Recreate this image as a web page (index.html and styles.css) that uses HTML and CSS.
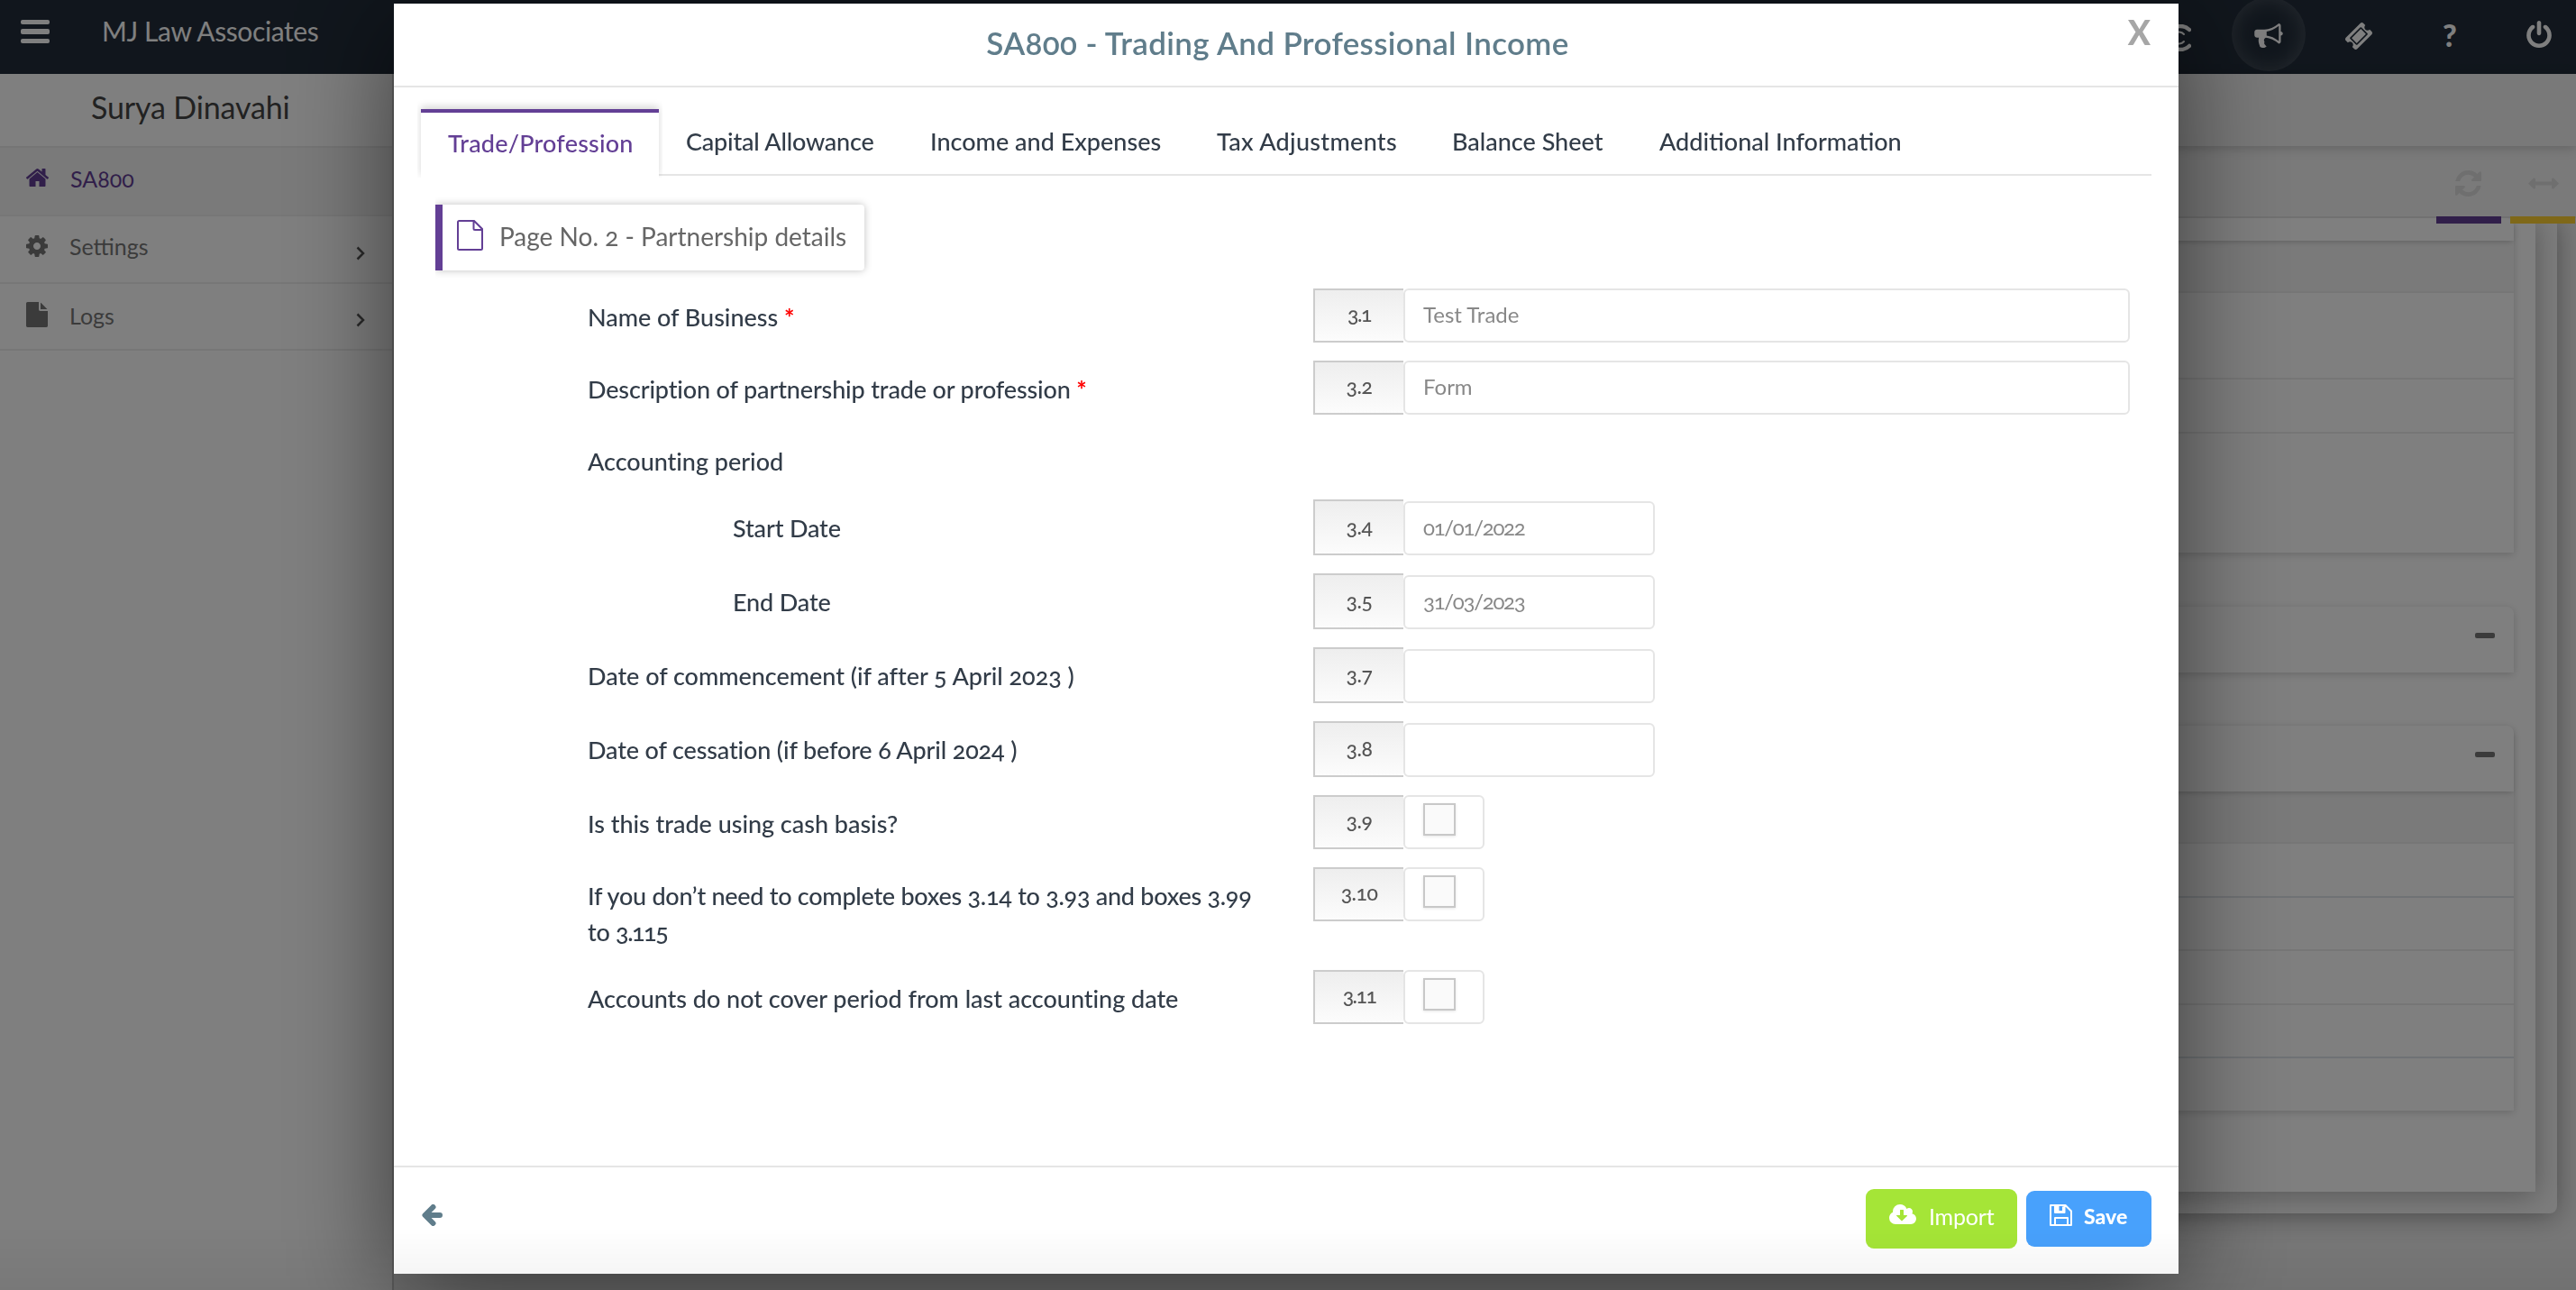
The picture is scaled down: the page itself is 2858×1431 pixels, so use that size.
FILE: index.html
```html
<!DOCTYPE html>
<html lang="en">
<head>
    <meta charset="UTF-8">
    <meta name="viewport" content="width=device-width, initial-scale=1.0">
    <title>SA800 - Trading And Professional Income</title>
    <link rel="stylesheet" href="styles.css">
</head>
<body>
    <header class="topbar">
        <div class="burger"><span></span><span></span><span></span></div>
        <div class="firm">MJ Law Associates</div>
        <nav class="top-icons">
            <svg class="i-sync" viewBox="0 0 30 30"><g fill="none" stroke="#fff" stroke-linecap="round"><path stroke-width="4.5" d="M28 6A14 13 0 1 0 28 24"/><path stroke-width="2" d="M22 11A7 6.500 0 1 0 22 19"/></g></svg>
            <div class="horn"><svg viewBox="0 128 1792 1536"><path d="M1664 640q53 0 90.500 37.500t37.500 90.500-37.500 90.500-90.500 37.500v384q0 52-38 90t-90 38q-417-347-812-380-58 19-91 66t-31 100.500 40 92.500q-20 33-23 65.500t6 58 33.500 55 48 50 61.500 50.500q-29 58-111.500 83t-168.500 11.500-132-55.500q-7-23-29.500-87.500t-32-94.500-23-89-15-101 3.500-98.500 22-110.500h-122q-66 0-113-47t-47-113v-192q0-66 47-113t113-47h480q435 0 896-384 52 0 90 38t38 90v384zm-128 604v-954q-394 302-768 343v270q377 42 768 341z"/></svg></div>
            <svg class="i-ticket" viewBox="53 53 1686 1686"><path d="M1024 452l316 316-572 572-316-316zm-211 979l618-618q19-19 19-45t-19-45l-362-362q-18-18-45-18t-45 18l-618 618q-19 19-19 45t19 45l362 362q18 18 45 18t45-18zm889-637l-907 908q-37 37-90.500 37t-90.500-37l-126-126q56-56 56-136t-56-136-136-56-136 56l-125-126q-37-37-37-90.500t37-90.500l907-906q37-37 90.500-37t90.500 37l125 125q-56 56-56 136t56 136 136 56 136-56l126 125q37 37 37 90.500t-37 90.500z"/></svg>
            <span class="help">?</span>
            <svg class="i-power" viewBox="128 0 1536 1664"><path d="M1664 896q0 156-61 298t-164 245-245 164-298 61-298-61-245-164-164-245-61-298q0-182 80.500-343t226.500-270q43-32 95.500-25t83.500 50q32 42 24.500 94.500t-49.500 84.500q-98 74-151.500 181t-53.500 228q0 104 40.500 198.500t109.500 163.500 163.500 109.500 198.500 40.500 198.500-40.500 163.500-109.500 109.500-163.500 40.500-198.500q0-121-53.500-228t-151.500-181q-42-32-49.500-84.500t24.500-94.500q31-43 84-50t95 25q146 109 226.500 270t80.500 343zm-640-768v640q0 52-38 90t-90 38-90-38-38-90v-640q0-52 38-90t90-38 90 38 38 90z"/></svg>
        </nav>
    </header>

    <div class="layout">
        <aside class="sidebar">
            <div class="user">Surya Dinavahi</div>
            <div class="side-item active">
                <svg class="i-home" viewBox="96 253 1600 1283"><path d="M1472 992v480q0 26-19 45t-45 19h-384v-384h-256v384h-384q-26 0-45-19t-19-45v-480q0-1 .5-3t.5-3l575-474 575 474q1 2 1 6zm223-69l-62 74q-8 9-21 11h-3q-13 0-21-7l-692-577-692 577q-12 8-24 7-13-2-21-11l-62-74q-8-10-7-23.500t11-21.500l719-599q32-26 76-26t76 26l244 204v-195q0-14 9-23t23-9h192q14 0 23 9t9 23v408l219 182q10 8 11 21.500t-7 23.500z"/></svg>
                <span class="side-name">SA800</span>
            </div>
            <div class="side-item">
                <svg class="i-cog" viewBox="128 128 1536 1536"><path d="M1152 896q0-106-75-181t-181-75-181 75-75 181 75 181 181 75 181-75 75-181zm512-109v222q0 12-8 23t-20 13l-185 28q-19 54-39 91 35 50 107 138 10 12 10 25t-9 23q-27 37-99 108t-94 71q-12 0-26-9l-138-108q-44 23-91 38-16 136-29 186-7 28-36 28h-222q-14 0-24.500-8.500t-11.500-21.500l-28-184q-49-16-90-37l-141 107q-10 9-25 9-14 0-25-11-126-114-165-168-7-10-7-23 0-12 8-23 15-21 51-66.500t54-70.500q-27-50-41-99l-183-27q-13-2-21-12.500t-8-23.500v-222q0-12 8-23t19-13l186-28q14-46 39-92-40-57-107-138-10-12-10-24 0-10 9-23 26-36 98.500-107.500t94.500-71.500q13 0 26 10l138 107q44-23 91-38 16-136 29-186 7-28 36-28h222q14 0 24.500 8.500t11.500 21.500l28 184q49 16 90 37l142-107q9-9 24-9 13 0 25 10 129 119 165 170 7 8 7 22 0 12-8 23-15 21-51 66.500t-54 70.500q26 50 41 98l183 28q13 2 21 12.500t8 23.500z"/></svg>
                <span class="side-name">Settings</span>
                <svg class="chev" viewBox="0 0 10 16"><path d="M1.500 1.500L8 8l-6.500 6.500"/></svg>
            </div>
            <div class="side-item last">
                <svg class="i-file" viewBox="128 0 1536 1792"><path d="M1152 512v-472q22 14 36 28l408 408q14 14 28 36h-472zm-128 32q0 40 28 68t68 28h544v1056q0 40-28 68t-68 28h-1344q-40 0-68-28t-28-68v-1600q0-40 28-68t68-28h800v544z"/></svg>
                <span class="side-name">Logs</span>
                <svg class="chev" viewBox="0 0 10 16"><path d="M1.500 1.500L8 8l-6.500 6.500"/></svg>
            </div>
        </aside>

        <main class="main">
            <div class="crumbs"></div>
            <div class="toolbar">
                <div class="tool purple"><svg viewBox="128 128 1536 1536"><path d="M1639 1056q0 5-1 7-64 268-268 434.500t-478 166.500q-146 0-282.500-55t-243.500-157l-129 129q-19 19-45 19t-45-19-19-45v-448q0-26 19-45t45-19h448q26 0 45 19t19 45-19 45l-137 137q71 66 161 102t187 36q134 0 250-65t186-179q11-17 53-117 8-23 30-23h192q13 0 22.500 9.500t9.500 22.500zm25-800v448q0 26-19 45t-45 19h-448q-26 0-45-19t-19-45 19-45l138-138q-148-137-349-137-134 0-250 65t-186 179q-11 17-53 117-8 23-30 23h-199q-13 0-22.500-9.500t-9.500-22.500v-7q65-268 270-434.500t480-166.500q146 0 284 55.500t245 156.500l130-129q19-19 45-19t45 19 19 45z"/></svg></div>
                <div class="tool yellow"><svg class="wide" viewBox="0 0 34 13"><path d="M0 6.500L6 .5Q8 0 8 2v2.500h18V2q0-2 2-1.500l6 6-6 6q-2 .5-2-1.500V8.500H8V11q0 2-2 1.500z"/></svg></div>
            </div>
            <div class="outer">
                <div class="inner">
                    <section class="card first">
                        <div class="card-head"></div>
                        <div class="line shade h58"></div>
                        <div class="line h96"></div>
                        <div class="line h59"></div>
                        <div class="line h133"></div>
                    </section>
                    <section class="card second">
                        <div class="card-head"><i class="minus"></i></div>
                    </section>
                    <section class="card third">
                        <div class="card-head"><i class="minus"></i></div>
                        <div class="line shade h58"></div>
                        <div class="line h59 blue"></div>
                        <div class="line h59"></div>
                        <div class="line h59"></div>
                        <div class="line h59 blue"></div>
                        <div class="line h58"></div>
                    </section>
                </div>
            </div>
        </main>
    </div>

    <div class="backdrop">
        <div class="modal">
            <div class="modal-header">
                <h1>SA800 - Trading And Professional Income</h1>
                <span class="close">X</span>
            </div>

            <div class="modal-body">
                <ul class="tabs">
                    <li class="tab-trade active">Trade/Profession</li>
                    <li class="tab-capital">Capital Allowance</li>
                    <li class="tab-income">Income and Expenses</li>
                    <li class="tab-tax">Tax Adjustments</li>
                    <li class="tab-balance">Balance Sheet</li>
                    <li class="tab-info">Additional Information</li>
                </ul>

                <div class="page-title">
                    <svg viewBox="0 0 29 34"><path d="M2.500 1h16.500L28 10v21.500q0 1.500-1.500 1.500h-24Q1 33 1 31.500v-29Q1 1 2.500 1zM18.500 1v8.500q0 1.500 1.500 1.500h8"/></svg>
                    <span>Page No. 2 - Partnership details</span>
                </div>

                <div class="row">
                    <label>Name of Business <b>*</b></label>
                    <span class="addon ones">3.1</span><div class="input full">Test Trade</div>
                </div>
                <div class="row">
                    <label class="snug">Description of partnership trade or profession <b>*</b></label>
                    <span class="addon">3.2</span><div class="input full">Form</div>
                </div>
                <div class="row heading">
                    <label>Accounting period</label>
                </div>
                <div class="row date">
                    <label class="indent snug">Start Date</label>
                    <span class="addon">3.4</span><div class="input">01/01/2022</div>
                </div>
                <div class="row date">
                    <label class="indent snug">End Date</label>
                    <span class="addon">3.5</span><div class="input">31/03/2023</div>
                </div>
                <div class="row date">
                    <label>Date of commencement (if after 5 April 2023 )</label>
                    <span class="addon">3.7</span><div class="input"></div>
                </div>
                <div class="row date">
                    <label class="snug">Date of cessation (if before 6 April 2024 )</label>
                    <span class="addon">3.8</span><div class="input"></div>
                </div>
                <div class="row">
                    <label>Is this trade using cash basis?</label>
                    <span class="addon">3.9</span><div class="input check"><i></i></div>
                </div>
                <div class="row tall">
                    <label class="snugger">If you don’t need to complete boxes 3.14 to 3.93 and boxes 3.99<br>to <span class="ones">3.115</span></label>
                    <span class="addon">3.10</span><div class="input check"><i></i></div>
                </div>
                <div class="row">
                    <label>Accounts do not cover period from last accounting date</label>
                    <span class="addon ones">3.11</span><div class="input check"><i></i></div>
                </div>
            </div>

            <div class="modal-footer">
                <svg class="back" viewBox="0 0 23 24"><path d="M12.500 3L3.500 12l9 9M4.500 12H20"/></svg>
                <button class="btn import">
                    <svg viewBox="-64 128 1920 1408"><path d="M1216 928q0-14-9-23t-23-9h-224v-352q0-13-9.500-22.500t-22.500-9.500h-192q-13 0-22.500 9.500t-9.500 22.500v352h-224q-13 0-22.500 9.500t-9.500 22.500q0 14 9 23l352 352q9 9 23 9t23-9l351-351q10-12 10-24zm640 224q0 159-112.500 271.500t-271.500 112.500h-1088q-185 0-316.500-131.500t-131.500-316.500q0-130 70-240t188-165q-2-30-2-43 0-212 150-362t362-150q156 0 285.500 87t188.500 231q71-62 166-62 106 0 181 75t75 181q0 76-41 138 130 31 213.500 135.500t83.500 238.500z"/></svg>
                    <span>Import</span>
                </button>
                <button class="btn save">
                    <svg viewBox="0 0 25 24"><path fill="none" stroke="#fff" stroke-width="2" stroke-linejoin="round" d="M1 1h16.500L24 7.500V23H1zM6 23v-8h14v8M6 1v8h10.500V1"/><path fill="#fff" d="M6 1h4.500v8H6zM14 2.500h2.500V9H10V7h4z"/></svg>
                    <span>Save</span>
                </button>
            </div>
        </div>
    </div>
    <div class="bottom-fade"></div>
</body>
</html>
```
FILE: styles.css
```css
:root {
    --purple: #633f95;
    --ink: #323c48;
    --line: #e5e5e5;
    --slate: #607d8b;
}

* {
    box-sizing: border-box;
}

body {
    margin: 0;
    height: 1431px;
    overflow: hidden;
    background: #f1f1f1;
    font-family: Lato, "Open Sans", sans-serif;
    font-variant-numeric: oldstyle-nums;
    color: var(--ink);
}

svg {
    display: block;
    flex: none;
}

/* top bar */
.topbar {
    height: 82px;
    background: #222d3a;
    display: flex;
    align-items: flex-start;
    padding-left: 23px;
}

.burger {
    width: 32px;
    padding-top: 22px;
    display: grid;
    gap: 5px;
}

.burger span {
    height: 5.400px;
    border-radius: 2px;
    background: #fff;
}

.firm {
    margin: 15px 0 0 58px;
    font-size: 30px;
    line-height: 38px;
    color: #fff;
    letter-spacing: -0.4px;
}

.top-icons {
    margin-left: auto;
    padding-right: 27px;
    display: flex;
    align-items: flex-start;
    fill: #fff;
}

.i-sync {
    width: 30px;
    height: 30px;
    margin: 27px 45px 0 0;
}

.horn {
    width: 82px;
    height: 82px;
    margin: -3px 44px 0 0;
    border-radius: 50%;
    box-shadow: inset 0 0 24px rgba(255, 255, 255, 0.2);
    display: grid;
    place-content: center;
}

.horn svg {
    width: 32px;
    height: 27px;
    margin-top: 2px;
}

.i-ticket {
    width: 30px;
    height: 30px;
    margin-top: 25px;
}

.help {
    width: 18px;
    margin: 19px 75px 0 78px;
    font: 900 34px/40px Lato, sans-serif;
    color: #fff;
}

.i-power {
    width: 28px;
    height: 30px;
    margin-top: 23px;
}

/* page behind the dialog */
.layout {
    display: flex;
    height: 1349px;
}

.sidebar {
    position: relative;
    z-index: 5;
    width: 437px;
    background: #fff;
    border-right: 2px solid #ccc;
}

.user {
    height: 80px;
    padding: 16px 0 0 101px;
    font-size: 34px;
    line-height: 42px;
    letter-spacing: -0.15px;
    color: #444;
    white-space: nowrap;
}

.side-item {
    height: 75px;
    padding: 0 30px 0 29px;
    border-bottom: 2px solid #eee;
    display: flex;
    align-items: center;
    fill: #777;
    color: #777;
    font-size: 25px;
}

.side-item.active {
    height: 78px;
    background: #f4f4f4;
    border-top: 2px solid #ebebeb;
    fill: var(--purple);
    color: var(--purple);
}

.side-item.last {
    height: 74px;
}

.side-name {
    margin-left: 24px;
    padding-bottom: 7px;
    width: 318px;
}

.last .side-name {
    padding-bottom: 3px;
}

.i-home {
    width: 25px;
    height: 20px;
    margin-top: -8px;
}

.i-cog {
    width: 24px;
    height: 24px;
    margin-top: -7px;
}

.i-file {
    width: 24px;
    height: 28px;
    margin-top: -5px;
}

.chev {
    width: 10px;
    height: 16px;
    margin-top: 8px;
    fill: none;
    stroke: #555;
    stroke-width: 2.500;
}

.main {
    flex: 1;
    display: flex;
    flex-direction: column;
    align-items: flex-start;
}

.crumbs {
    width: 100%;
    height: 80px;
    flex: none;
    background: #f2f2f2;
    box-shadow: 0 2px 12px rgba(0, 0, 0, 0.2);
    z-index: 3;
}

.toolbar {
    width: 100%;
    height: 80px;
    flex: none;
    background: #f4f4f4;
    border-bottom: 2px solid #e2e2e2;
    display: flex;
    justify-content: flex-end;
    gap: 10px;
    padding-right: 1px;
    z-index: 2;
}

.tool {
    width: 72px;
    height: 86px;
    padding-top: 27px;
    border-bottom: 8px solid var(--purple);
    display: flex;
    justify-content: center;
    fill: #dedede;
}

.tool svg {
    width: 29px;
    height: 29px;
    margin-left: -2px;
}

.tool .wide {
    width: 34px;
    height: 13px;
    margin: 8px 0 0 2px;
}

.tool.yellow {
    border-color: #ffd032;
}

.outer {
    width: 2400px;
    height: 1104px;
    padding-right: 24px;
    background: #f9f9f9;
    border-radius: 0 0 8px 8px;
    box-shadow: 0 4px 30px rgba(0, 0, 0, 0.35);
}

.inner {
    height: 1080px;
    padding-right: 24px;
    background: #fff;
    box-shadow: 0 4px 30px rgba(0, 0, 0, 0.3);
    display: flex;
    flex-direction: column;
    gap: 59.500px;
}

.card {
    box-shadow: 0 2px 10px rgba(0, 0, 0, 0.18);
    border-radius: 0 8px 0 0;
}

.card-head {
    height: 73px;
    padding: 29px 21px 0 0;
    display: flex;
    justify-content: flex-end;
    position: relative;
    box-shadow: 0 3px 6px -2px rgba(0, 0, 0, 0.22);
    border-radius: inherit;
}

.first .card-head {
    height: 25px;
    padding-top: 0;
}

.second .card-head {
    box-shadow: none;
}

.minus {
    width: 22px;
    height: 6px;
    border-radius: 2px;
    background: #777;
}

.line {
    border-bottom: 2px solid #ededed;
}

.line:last-child {
    border-bottom: 0;
}

.shade {
    background: #f5f5f5;
}

.line.blue {
    border-color: #dfe5ea;
}

.h58 { height: 58px; }
.h59 { height: 59.500px; }
.h96 { height: 96px; }
.h133 { height: 132.500px; }

/* dialog */
.backdrop {
    position: fixed;
    inset: 0;
    z-index: 10;
    background: rgba(0, 0, 0, 0.5);
    padding: 4px 0 0 437px;
}

.modal {
    width: 1980px;
    height: 1409px;
    background: #fff;
    box-shadow: 0 20px 110px rgba(0, 0, 0, 0.55);
    display: flex;
    flex-direction: column;
}

.modal-header {
    height: 93px;
    flex: none;
    border-bottom: 2px solid var(--line);
    position: relative;
}

.modal-header h1 {
    margin: 0;
    padding: 21px 19px 0 0;
    text-align: center;
    font-size: 35px;
    line-height: 44px;
    font-weight: 600;
    letter-spacing: 0.35px;
    color: var(--slate);
}

.close {
    position: absolute;
    right: 31px;
    top: 12px;
    font-size: 37px;
    line-height: 40px;
    font-weight: 900;
    color: #a6a6a6;
}

.modal-body {
    flex: 1;
    padding: 24px 30px 0;
}

.tabs {
    list-style: none;
    margin: 0;
    padding: 0;
    height: 74px;
    border-bottom: 2px solid var(--line);
    display: flex;
    font-size: 27px;
    font-weight: 500;
    line-height: 36px;
    white-space: nowrap;
}

.tabs li {
    padding: 18px 0 0 30px;
}

.tabs li.active {
    height: 76px;
    background: #fff;
    color: var(--purple);
    border-top: 4px solid var(--purple);
    padding-top: 16px;
    box-shadow: 0 -3px 8px rgba(0, 0, 0, 0.16);
    clip-path: inset(-12px -4px 0 -4px);
}

.tab-trade { width: 264px; letter-spacing: 0.2px; }
.tab-capital { width: 271px; letter-spacing: -0.2px; }
.tab-income { width: 318px; }
.tab-tax { width: 261px; letter-spacing: 0.3px; }
.tab-balance { width: 230px; }

.page-title {
    width: 476px;
    height: 73px;
    margin: 32px 0 20px 16px;
    border-left: 8px solid var(--purple);
    border-radius: 0 4px 4px 0;
    box-shadow: 0 0 8px rgba(0, 0, 0, 0.25);
    clip-path: inset(-10px -10px -10px 0);
    display: flex;
    align-items: center;
    padding-left: 16px;
    font-size: 28px;
    color: #666;
    white-space: nowrap;
}

.page-title svg {
    width: 29px;
    height: 34px;
    margin: -5px 18px 0 0;
    fill: none;
    stroke: var(--purple);
    stroke-width: 2;
}

.page-title span {
    padding-bottom: 3px;
}

.row {
    height: 80px;
    padding-left: 185px;
    display: flex;
    align-items: flex-start;
}

.row.heading {
    height: 74px;
}

.row.date {
    height: 82px;
}

.row.tall {
    height: 114px;
}

.row label {
    width: 805px;
    flex: none;
    padding-top: 12px;
    font-size: 27px;
    line-height: 40px;
    font-weight: 500;
    letter-spacing: -0.03px;
    white-space: nowrap;
}

.row label.indent {
    padding-left: 161px;
}

.row label b {
    color: #f00;
}

.row label.snug {
    letter-spacing: -0.15px;
}

.row label.snugger {
    letter-spacing: -0.27px;
}

.row .ones {
    letter-spacing: -1.5px;
}

.addon {
    width: 100px;
    height: 60px;
    border: 2px solid #ccc;
    border-right: 0;
    background: linear-gradient(#eee, #fcfcfc);
    text-align: center;
    font-size: 23px;
    font-weight: 500;
    line-height: 53px;
    letter-spacing: -0.5px;
    color: #555;
}

.input {
    width: 279px;
    height: 60px;
    padding-left: 20px;
    border: 2px solid var(--line);
    border-radius: 6px;
    font-size: 24px;
    line-height: 54px;
    color: #888;
}

.input.full {
    width: 806px;
}

.date .addon {
    height: 62px;
    line-height: 56px;
}

.date .input {
    margin-top: 2px;
    line-height: 53px;
    letter-spacing: -1.3px;
}

.input.check {
    width: 90px;
    padding-top: 7px;
}

.check i {
    display: block;
    width: 36px;
    height: 36px;
    border: 2px solid #c8c8c8;
    background: #fafafa;
    box-shadow: 0 1px 3px rgba(0, 0, 0, 0.1);
}

.modal-footer {
    height: 120px;
    flex: none;
    border-top: 2px solid var(--line);
    padding: 0 30px;
    display: flex;
    align-items: flex-start;
    gap: 10px;
}

.back {
    width: 23px;
    height: 24px;
    margin: 41px auto 0 1px;
    fill: none;
    stroke: var(--slate);
    stroke-width: 6;
    stroke-linecap: round;
    stroke-linejoin: round;
}

.btn {
    border: 0;
    border-radius: 9px;
    padding: 0 26px 6px;
    color: #fff;
    fill: #fff;
    font-family: inherit;
    font-size: 25px;
    line-height: 30px;
    display: flex;
    align-items: center;
}

.btn.import {
    width: 168px;
    height: 66px;
    margin-top: 24px;
    background: #a5e537;
    letter-spacing: -0.2px;
}

.import svg {
    width: 30px;
    height: 22px;
    margin: -4px 14px 0 0;
}

.btn.save {
    width: 139px;
    height: 62px;
    margin-top: 26px;
    background: #48a1fc;
    font-weight: 900;
    font-size: 23px;
}

.save svg {
    width: 25px;
    height: 24px;
    margin: -3px 13px 0 0;
}

.bottom-fade {
    position: fixed;
    inset: auto 0 0;
    height: 70px;
    z-index: 20;
    background: linear-gradient(transparent, rgba(0, 0, 0, 0.05));
    pointer-events: none;
}
```
